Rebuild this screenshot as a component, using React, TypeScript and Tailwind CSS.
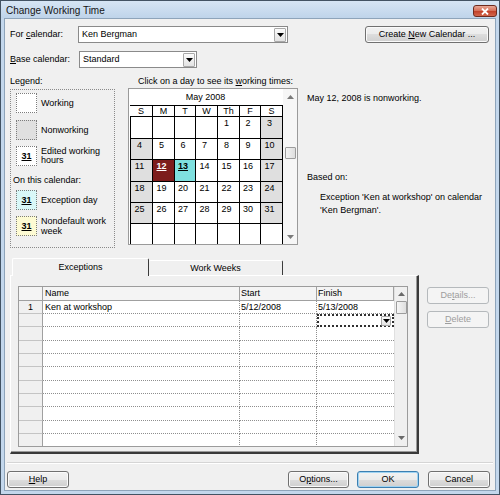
import React from "react";

const F = "font-['Liberation_Sans',Arial,sans-serif]";

function Arrow({ up = false, color = "#000" }: { up?: boolean; color?: string }) {
  return (
    <svg width="7" height="4" viewBox="0 0 7 4">
      {up ? <path d="M0 4h7L3.5 0z" fill={color} /> : <path d="M0 0h7L3.5 4z" fill={color} />}
    </svg>
  );
}

function DropBtn({ className = "" }: { className?: string }) {
  return (
    <div
      className={`flex items-center justify-center border border-[#a9a9a9] rounded-[1px] bg-[linear-gradient(to_bottom,#fbfbfb,#e3e3e3)] ${className}`}
    >
      <Arrow />
    </div>
  );
}

function Btn({
  children,
  className = "",
  kind = "normal",
}: {
  children: React.ReactNode;
  className?: string;
  kind?: "normal" | "default" | "disabled";
}) {
  const look =
    kind === "disabled"
      ? "border-[#b5b9bc] bg-[#f4f4f4] text-[#9d9d9d]"
      : kind === "default"
      ? "border-[#3c7fb1] bg-[linear-gradient(to_bottom,#f2f2f2_0%,#ebebeb_50%,#dddddd_50%,#cfcfcf_100%)] shadow-[inset_0_0_0_1px_#9fd3f2]"
      : "border-[#707070] bg-[linear-gradient(to_bottom,#f2f2f2_0%,#ebebeb_50%,#dddddd_50%,#cfcfcf_100%)] shadow-[inset_0_0_0_1px_#fafafa]";
  return (
    <div className={`flex h-[17px] items-center justify-center rounded-[3px] border ${look} ${className}`}>
      <span>{children}</span>
    </div>
  );
}

const calRows: string[][] = [
  ["", "", "", "", "1", "2", "3"],
  ["4", "5", "6", "7", "8", "9", "10"],
  ["11", "12", "13", "14", "15", "16", "17"],
  ["18", "19", "20", "21", "22", "23", "24"],
  ["25", "26", "27", "28", "29", "30", "31"],
  ["", "", "", "", "", "", ""],
];
const colW = [22, 22, 21, 22, 22, 21, 22];
const rowH = [22, 21, 22, 21, 21, 21];
const dayNames = ["S", "M", "T", "W", "Th", "F", "S"];

function Calendar() {
  return (
    <div className="flex h-[157px] w-[170px] border border-[#9a9a9a] bg-white">
      <div className="ml-px flex w-[153px] flex-col">
        <div className="flex h-[16px] items-center justify-center pr-[2px]">May 2008</div>
        <div className="flex h-[11px] border-t border-r border-black">
          {dayNames.map((d, i) => (
            <div
              key={i}
              style={{ width: colW[i] }}
              className={`flex items-center justify-center leading-[10px] ${i > 0 ? "border-l border-black" : ""}`}
            >
              {d}
            </div>
          ))}
        </div>
        <div className="flex flex-1 flex-col overflow-hidden border-r border-l border-black">
          {calRows.map((r, ri) => (
            <div
              key={ri}
              style={{ height: ri === 5 ? undefined : rowH[ri] }}
              className={`flex border-t border-black ${ri === 5 ? "flex-1" : ""}`}
            >
              {r.map((d, ci) => {
                const weekend = (ci === 0 || ci === 6) && d !== "";
                let cls = "bg-white";
                let txt = "";
                if (weekend) cls = "bg-[#dfdfdf]";
                if (d === "12") {
                  cls = "bg-[#7d1d1c]";
                  txt = "text-white font-bold underline";
                }
                if (d === "13") {
                  cls = "bg-[#7fe0df]";
                  txt = "font-bold underline";
                }
                return (
                  <div
                    key={ci}
                    style={{ width: ci === 0 ? colW[ci] - 1 : colW[ci] }}
                    className={`flex justify-center pr-[4px] pt-[1px] leading-[11px] ${ci > 0 ? "border-l border-black" : ""} ${cls}`}
                  >
                    <span className={txt}>{d}</span>
                  </div>
                );
              })}
            </div>
          ))}
        </div>
      </div>
      <div className="flex w-[14px] flex-col items-center bg-[#f6f6f6]">
        <div className="mt-[6px]">
          <Arrow up color="#7a7a7a" />
        </div>
        <div className="mt-[48px] h-[12px] w-[11px] rounded-[1px] border border-[#9c9c9c] bg-[linear-gradient(to_right,#f4f4f4,#dedede)]" />
        <div className="mt-auto mb-[5px]">
          <Arrow color="#7a7a7a" />
        </div>
      </div>
    </div>
  );
}

function Swatch({ cls, label }: { cls: string; label?: boolean }) {
  return (
    <div
      className={`flex h-[20px] w-[21px] shrink-0 items-center justify-center border border-dotted border-[#7c7c7c] ${cls}`}
    >
      {label ? <span className="font-bold underline">31</span> : null}
    </div>
  );
}

function Legend() {
  return (
    <div className="flex h-[159px] w-[105px] flex-col border border-dotted border-[#8a8a8a] pl-[5px] pt-[3px]">
      <div className="flex items-center">
        <Swatch cls="bg-white" />
        <span className="ml-[4px]">Working</span>
      </div>
      <div className="mt-[7px] flex items-center">
        <Swatch cls="bg-[#e0e0e0]" />
        <span className="ml-[4px]">Nonworking</span>
      </div>
      <div className="mt-[6px] flex items-center">
        <Swatch cls="bg-white" label />
        <span className="ml-[4px] leading-[9px]">
          Edited working
          <br />
          hours
        </span>
      </div>
      <div className="mt-[9px] -ml-[3px] leading-[11px]">On this calendar:</div>
      <div className="mt-[4px] flex items-center">
        <Swatch cls="bg-[#d9f8f8]" label />
        <span className="ml-[4px]">Exception day</span>
      </div>
      <div className="mt-[6px] flex items-center">
        <Swatch cls="bg-[#fdfbd3]" label />
        <span className="ml-[4px] leading-[10px]">
          Nondefault work
          <br />
          week
        </span>
      </div>
    </div>
  );
}

const gridRowH = [13, 13, 14, 13, 13, 14, 13, 13, 14, 13, 13];

function ExceptionGrid() {
  return (
    <div className="flex h-[161px] w-[390px] border border-[#9c9c9c] bg-white">
      <div className="flex w-[375px] flex-col overflow-hidden">
        <div className="flex h-[14px] shrink-0 border-b border-[#a0a0a0] bg-[#f4f4f4] leading-[13px]">
          <div className="w-[24px] border-r border-[#a0a0a0]" />
          <div className="w-[197px] border-r border-[#a0a0a0] pl-[2px]">Name</div>
          <div className="w-[77px] border-r border-[#a0a0a0] pl-[1px]">Start</div>
          <div className="w-[77px] border-r border-[#a0a0a0] pl-[1px]">Finish</div>
        </div>
        {gridRowH.map((h, i) => (
          <div key={i} style={{ height: h }} className="flex shrink-0">
            <div className="flex w-[24px] items-center justify-center border-r border-b border-r-[#a0a0a0] border-b-[#c4c4c4] bg-[#f0f0f0]">
              {i === 0 ? "1" : ""}
            </div>
            <div className="flex w-[197px] items-center border-r border-b border-dotted border-[#8e8e8e] pl-[2px]">
              {i === 0 ? "Ken at workshop" : ""}
            </div>
            <div className="flex w-[77px] items-center border-r border-b border-dotted border-[#8e8e8e] pl-[1px]">
              {i === 0 ? "5/12/2008" : ""}
            </div>
            {i === 1 ? (
              <div className="flex w-[77px] items-center justify-end border-2 border-dotted border-[#303030] bg-white pr-[1px]">
                <DropBtn className="h-[10px] w-[10px]" />
              </div>
            ) : (
              <div className="flex w-[77px] items-center border-b border-dotted border-[#8e8e8e] pl-[1px]">
                {i === 0 ? "5/13/2008" : ""}
              </div>
            )}
          </div>
        ))}
      </div>
      <div className="flex w-[13px] flex-col items-center border-l border-[#e0e0e0] bg-[#f0f0f0]">
        <div className="mt-[5px]">
          <Arrow up color="#6a6a6a" />
        </div>
        <div className="mt-[5px] h-[13px] w-[11px] rounded-[1px] border border-[#9c9c9c] bg-[linear-gradient(to_right,#f6f6f6,#dfdfdf)]" />
        <div className="mt-auto mb-[6px]">
          <Arrow color="#6a6a6a" />
        </div>
      </div>
    </div>
  );
}

export default function App() {
  return (
    <div
      className={`${F} flex h-[495px] w-[500px] flex-col overflow-hidden border border-[#435363] bg-[#c3d7ec] text-[9px] leading-[11px] text-black`}
    >
      {/* title bar */}
      <div className="flex h-[17px] shrink-0 items-start justify-between bg-[linear-gradient(to_bottom,#d6e5f4,#bfd4ea)] pl-[5px] pr-[2px]">
        <span className="mt-[4px] text-[10px] leading-[12px] text-[#151515]">Change Working Time</span>
        <div className="mt-[4px] flex h-[12px] w-[24px] items-center justify-center rounded-[3px] border border-[#6d2b1f] bg-[linear-gradient(to_bottom,#e8a897_0%,#d6725c_45%,#c2432b_55%,#d2664c_100%)]">
          <svg width="8" height="7" viewBox="0 0 8 7">
            <path d="M1 0.5L7 6.5M7 0.5L1 6.5" stroke="#fff" strokeWidth="1.8" />
          </svg>
        </div>
      </div>

      {/* body */}
      <div className="mx-[3px] mb-[3px] flex flex-1 flex-col border border-[#8ea4ba] bg-[#f0f0f0] px-[5px]">
        {/* row 1 */}
        <div className="mt-[7px] flex h-[17px] items-center">
          <div className="w-[68px]">
            For <span className="underline">c</span>alendar:
          </div>
          <div className="flex h-[17px] w-[210px] items-center border border-[#8a8a8a] bg-white pl-[3px] pr-px">
            <span className="flex-1">Ken Bergman</span>
            <DropBtn className="h-[14px] w-[12px]" />
          </div>
          <Btn className="ml-auto mr-px w-[124px]">
            Create <span className="underline">N</span>ew Calendar ...
          </Btn>
        </div>

        {/* row 2 */}
        <div className="mt-[8px] flex h-[17px] items-center">
          <div className="w-[69px]">
            <span className="underline">B</span>ase calendar:
          </div>
          <div className="flex h-[17px] w-[118px] items-center border border-[#8a8a8a] bg-white pl-[3px] pr-px">
            <span className="flex-1">Standard</span>
            <DropBtn className="h-[14px] w-[12px]" />
          </div>
        </div>

        {/* row 3 */}
        <div className="mt-[8px] flex">
          <div className="flex w-[105px] flex-col">
            <div className="h-[11px]">Legend:</div>
            <div className="mt-[2px]">
              <Legend />
            </div>
          </div>
          <div className="ml-[13px] flex w-[170px] flex-col">
            <div className="h-[11px] whitespace-nowrap pl-[10px]">
              Click on a day to see its <span className="underline">w</span>orking times:
            </div>
            <div className="mt-px">
              <Calendar />
            </div>
          </div>
          <div className="ml-[9px] flex flex-col">
            <div className="mt-[17px]">May 12, 2008 is nonworking.</div>
            <div className="mt-[68px]">Based on:</div>
            <div className="mt-[8px] pl-[13px] leading-[13px]">
              Exception &#39;Ken at workshop&#39; on calendar
              <br />
              &#39;Ken Bergman&#39;.
            </div>
          </div>
        </div>

        {/* row 4: tabs */}
        <div className="mt-[10px] flex">
          <div className="flex w-[409px] flex-col">
            <div className="flex h-[17px] items-end pl-[2px]">
              <div className="relative z-10 -mb-px flex h-[18px] w-[137px] items-center justify-center rounded-t-[2px] border-t border-l border-r border-t-[#ffffff] border-l-[#ffffff] border-r-[#3c3c3c] bg-[#f0f0f0] pb-px">
                Exceptions
              </div>
              <div className="flex h-[15px] w-[134px] items-center justify-center rounded-t-[2px] border-t border-r border-t-[#ffffff] border-r-[#3c3c3c] bg-[#f0f0f0]">
                Work Weeks
              </div>
            </div>
            <div className="flex h-[179px] flex-col border-t border-l border-r-2 border-b-2 border-t-[#ffffff] border-l-[#ffffff] border-r-[#3a3a3a] border-b-[#3a3a3a] pl-[7px] pt-[10px] shadow-[inset_-1px_-1px_0_#9a9a9a]">
              <ExceptionGrid />
            </div>
          </div>
          <div className="ml-[8px] flex w-[62px] flex-col pt-[29px]">
            <Btn kind="disabled" className="w-[62px]">
              De<span className="underline">t</span>ails...
            </Btn>
            <Btn kind="disabled" className="mt-[7px] w-[62px]">
              <span className="underline">D</span>elete
            </Btn>
          </div>
        </div>

        {/* separator */}
        <div className="-mx-[3px] mt-[8px] border-t border-b border-t-[#d5d5d5] border-b-[#ffffff]" />

        {/* bottom buttons */}
        <div className="mt-[7px] flex h-[17px] items-center">
          <Btn className="-ml-[3px] w-[62px]">
            <span className="underline">H</span>elp
          </Btn>
          <Btn className="ml-auto w-[61px]">
            O<span className="underline">p</span>tions...
          </Btn>
          <Btn kind="default" className="ml-[8px] w-[62px]">
            OK
          </Btn>
          <Btn className="ml-[9px] w-[62px]">Cancel</Btn>
        </div>
      </div>
    </div>
  );
}
